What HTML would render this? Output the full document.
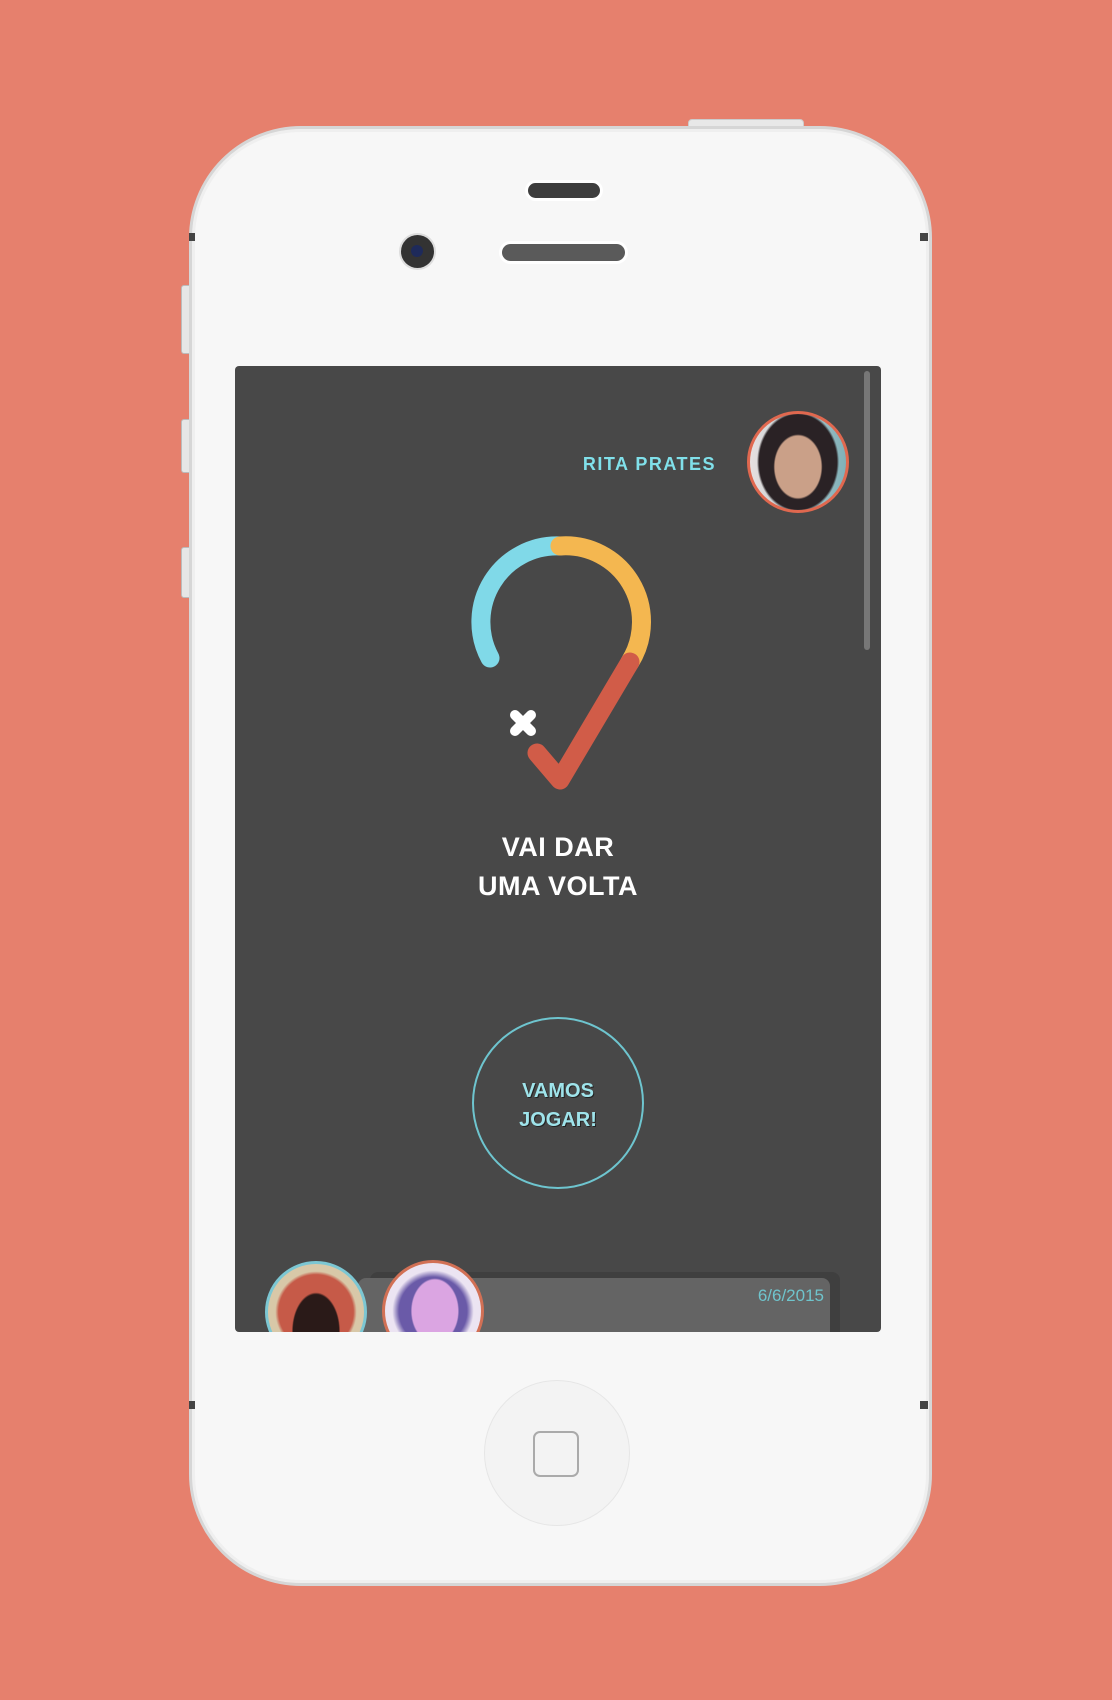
<!DOCTYPE html>
<html><head><meta charset="utf-8"><style>
html,body{margin:0;padding:0}
body{width:1112px;height:1700px;background:#e6806d;position:relative;overflow:hidden;font-family:"Liberation Sans",sans-serif}
.a{position:absolute}
</style></head><body>
<div class="a" style="left:688px;top:119px;width:114px;height:12px;background:#e8e8e8;border:1px solid #ccc;border-radius:4px 4px 0 0"></div>
<div class="a" style="left:181px;top:285px;width:12px;height:67px;background:#e6e6e6;border:1px solid #bbb;border-radius:3px 0 0 3px"></div>
<div class="a" style="left:181px;top:419px;width:12px;height:52px;background:#e6e6e6;border:1px solid #bbb;border-radius:3px 0 0 3px"></div>
<div class="a" style="left:181px;top:547px;width:12px;height:49px;background:#e6e6e6;border:1px solid #bbb;border-radius:3px 0 0 3px"></div>
<div class="a" style="left:189px;top:126px;width:737px;height:1454px;background:#f7f7f7;border:3px solid #d6d6d6;border-radius:112px;box-shadow:inset 0 0 0 3px #efefef"></div>
<div class="a" style="left:920px;top:233px;width:8px;height:8px;background:#444"></div>
<div class="a" style="left:189px;top:233px;width:6px;height:8px;background:#444"></div>
<div class="a" style="left:920px;top:1401px;width:8px;height:8px;background:#444"></div>
<div class="a" style="left:189px;top:1401px;width:6px;height:8px;background:#444"></div>
<div class="a" style="left:528px;top:183px;width:72px;height:15px;background:#3e3e3e;border-radius:8px;box-shadow:0 0 0 3px #fff"></div>
<div class="a" style="left:401px;top:235px;width:33px;height:33px;background:#333;border-radius:50%;box-shadow:0 0 0 2px #ddd"></div>
<div class="a" style="left:411px;top:245px;width:12px;height:12px;background:#1e2a5a;border-radius:50%"></div>
<div class="a" style="left:502px;top:244px;width:123px;height:17px;background:#5a5a5a;border-radius:9px;box-shadow:0 0 0 3px #fff"></div>
<div class="a" style="left:235px;top:366px;width:646px;height:966px;background:#484848;border-radius:4px;overflow:hidden">
  <div class="a" style="left:629px;top:5px;width:6px;height:279px;background:#777;border-radius:3px"></div>
  <div class="a" style="left:0;top:88px;width:481px;text-align:right;color:#80e0ea;font-weight:bold;font-size:18px;letter-spacing:1.5px">RITA PRATES</div>
  <div class="a" style="left:512px;top:45px;width:96px;height:96px;border-radius:50%;border:3px solid #e0684f;background:radial-gradient(ellipse 30% 40% at 50% 55%,#caa088 0 80%,transparent 85%),radial-gradient(ellipse 45% 55% at 50% 50%,#2a2225 0 90%,transparent 95%),linear-gradient(90deg,#e8e0e0,#7fb0b8)"></div>
  <svg class="a" style="left:0;top:0" width="646" height="966">
    <g fill="none" stroke-linecap="round" stroke-width="19" transform="translate(-235,-366)">
      <path d="M490 658 A76 76 0 0 1 560 546" stroke="#80d9e8"/>
      <path d="M560 546 A76 76 0 0 1 630 662" stroke="#f4b750"/>
      <path d="M630 662 L560 780 L537 753" stroke="#d15c48" stroke-linejoin="round"/>
      <path d="M515 715 L531 731 M531 715 L515 731" stroke="#fff" stroke-width="10"/>
    </g>
  </svg>
  <div class="a" style="left:0;width:646px;top:462px;text-align:center;color:#fff;font-weight:bold;font-size:27px;line-height:39px;letter-spacing:0.5px">VAI DAR<br>UMA VOLTA</div>
  <div class="a" style="left:237px;top:651px;width:168px;height:168px;border:2px solid #6ec5cf;border-radius:50%"></div>
  <div class="a" style="left:0;width:646px;top:711px;text-align:center;color:#9fe4eb;font-weight:bold;font-size:20px;line-height:29px;text-shadow:1px 1px 0 #222">VAMOS<br>JOGAR!</div>
  <div class="a" style="left:135px;top:906px;width:470px;height:70px;background:#3f3f3f;border-radius:8px"></div>
  <div class="a" style="left:123px;top:912px;width:472px;height:70px;background:#646464;border-radius:8px"></div>
  <div class="a" style="left:300px;top:920px;width:289px;text-align:right;color:#6fc4cc;font-size:17px">6/6/2015</div>
  <div class="a" style="left:30px;top:895px;width:96px;height:96px;border-radius:50%;border:3px solid #7cc7d3;background:radial-gradient(ellipse 28% 45% at 50% 70%,#2a1a18 0 85%,transparent 90%),radial-gradient(circle at 50% 50%,#c65a48 0 55%,#d8c8a8 60%)"></div>
  <div class="a" style="left:147px;top:894px;width:96px;height:96px;border-radius:50%;border:3px solid #d27055;background:radial-gradient(ellipse 28% 38% at 52% 50%,#dba5e2 0 85%,transparent 90%),radial-gradient(circle at 50% 50%,#6a5aa8 0 50%,#ece4f2 60%)"></div>
</div>
<div class="a" style="left:484px;top:1380px;width:144px;height:144px;border-radius:50%;background:#f3f3f3;border:1px solid #e6e6e6"></div>
<div class="a" style="left:533px;top:1431px;width:42px;height:42px;border:2px solid #aaa;border-radius:7px"></div>
</body></html>
